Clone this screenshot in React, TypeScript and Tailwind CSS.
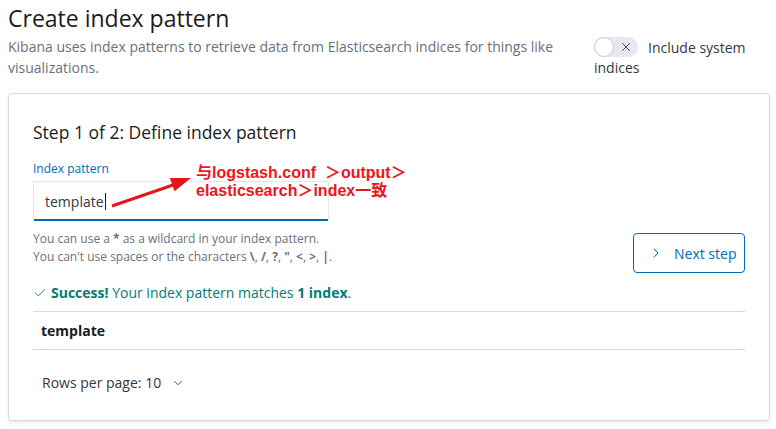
import { ChevronDown, ChevronRight, Check, X } from "lucide-react";

const font = { fontFamily: '"Open Sans", "Noto Sans CJK SC", sans-serif' };

export default function App() {
  return (
    <div
      className="h-[429px] w-[776px] overflow-hidden bg-white px-2 text-[#343741]"
      style={font}
    >
      <div className="flex">
        <div className="w-[586px]">
          <h1 className="pt-[2px] text-[23px] leading-[32px] text-[#1a1c21]">
            Create index pattern
          </h1>
          <p className="mt-[2px] w-[560px] text-[14px] leading-[21px] text-[#69707d]">
            Kibana uses index patterns to retrieve data from Elasticsearch
            indices for things like visualizations.
          </p>
        </div>
        <div className="pt-[33px] text-[14px] leading-[20px] text-[#343741]">
          <span className="relative mr-[10px] inline-flex h-[20px] w-[44px] translate-y-[4px] items-center rounded-full bg-[#e6e9ef]">
            <span className="absolute left-0 top-0 h-[20px] w-[20px] rounded-full border border-[#c5cad3] bg-white" />
            <X className="absolute right-[5px] h-[14px] w-[14px] text-[#343741]" strokeWidth={1.5} />
          </span>
          Include system
          <br />
          indices
        </div>
      </div>

      <div className="mt-[15px] h-[328px] w-[762px] rounded-[4px] border border-[#d3dae6] bg-white px-[24px] pt-[26px] shadow-[0_2px_3px_rgba(0,0,0,0.08)]">
        <h2 className="text-[17.5px] leading-[24px] text-[#1a1c21]">
          Step 1 of 2: Define index pattern
        </h2>

        <div className="relative flex justify-between">
          <div>
            <div className="mt-[16px] text-[12px] leading-[18px] text-[#006bb4]">
              Index pattern
            </div>
            <div className="mt-[3px] flex h-[40px] w-[296px] items-center border border-b-0 border-[#e4e8ee] bg-white px-[11px] text-[14px] text-[#343741] shadow-[inset_0_-2px_0_#006bb4]">
              template<span className="ml-[1px] h-[17px] w-px bg-[#1a1c21]" />
            </div>
            <div className="mt-[9px] text-[12px] leading-[18px] text-[#69707d]">
              You can use a <b>*</b> as a wildcard in your index pattern.
              <br />
              You can't use spaces or the characters <b>\</b>, <b>/</b>,{" "}
              <b>?</b>, <b>"</b>, <b>&lt;</b>, <b>&gt;</b>, <b>|</b>.
            </div>
          </div>

          <button className="-mb-[7px] flex h-[40px] w-[112px] items-center gap-[10px] self-end rounded-[4px] border border-[#006bb4] pl-[14px] text-[14px] text-[#006bb4]">
            <ChevronRight className="h-[16px] w-[16px]" strokeWidth={1.5} />
            Next step
          </button>

          <svg
            className="pointer-events-none absolute left-[78px] top-[17px]"
            width="100"
            height="50"
            viewBox="0 0 100 50"
          >
            <line x1="1" y1="45" x2="62" y2="24" stroke="#e3161b" strokeWidth="3" />
            <polygon points="80,17 63.5,30.3 58.9,17.1" fill="#e3161b" />
          </svg>
          <div
            className="pointer-events-none absolute left-[163px] top-[20px] whitespace-pre text-[16px] font-bold leading-[18px] text-[#f0141a]"
            style={{ fontFamily: '"Liberation Sans", "Noto Sans CJK SC", sans-serif' }}
          >
            {"与logstash.conf  ＞output＞"}
            <br />
            {"elasticsearch＞index一致"}
          </div>
        </div>

        <div className="mt-[17px] flex items-center gap-[4px] text-[14px] leading-[20px] text-[#017d73]">
          <Check className="h-[14px] w-[14px]" strokeWidth={1.5} />
          <span>
            <b>Success!</b> Your index pattern matches <b>1 index</b>.
          </span>
        </div>

        <div className="mt-[8px] w-[712px] border-t border-[#d3dae6]">
          <div className="flex h-[38px] items-center border-b border-[#d3dae6] px-[8px] text-[14px] font-bold text-[#1a1c21]">
            template
          </div>
        </div>

        <div className="mt-[22px] flex items-center gap-[10px] pl-[9px] text-[14px] text-[#343741]">
          Rows per page: 10
          <ChevronDown className="h-[14px] w-[14px]" strokeWidth={1.5} />
        </div>
      </div>
    </div>
  );
}
